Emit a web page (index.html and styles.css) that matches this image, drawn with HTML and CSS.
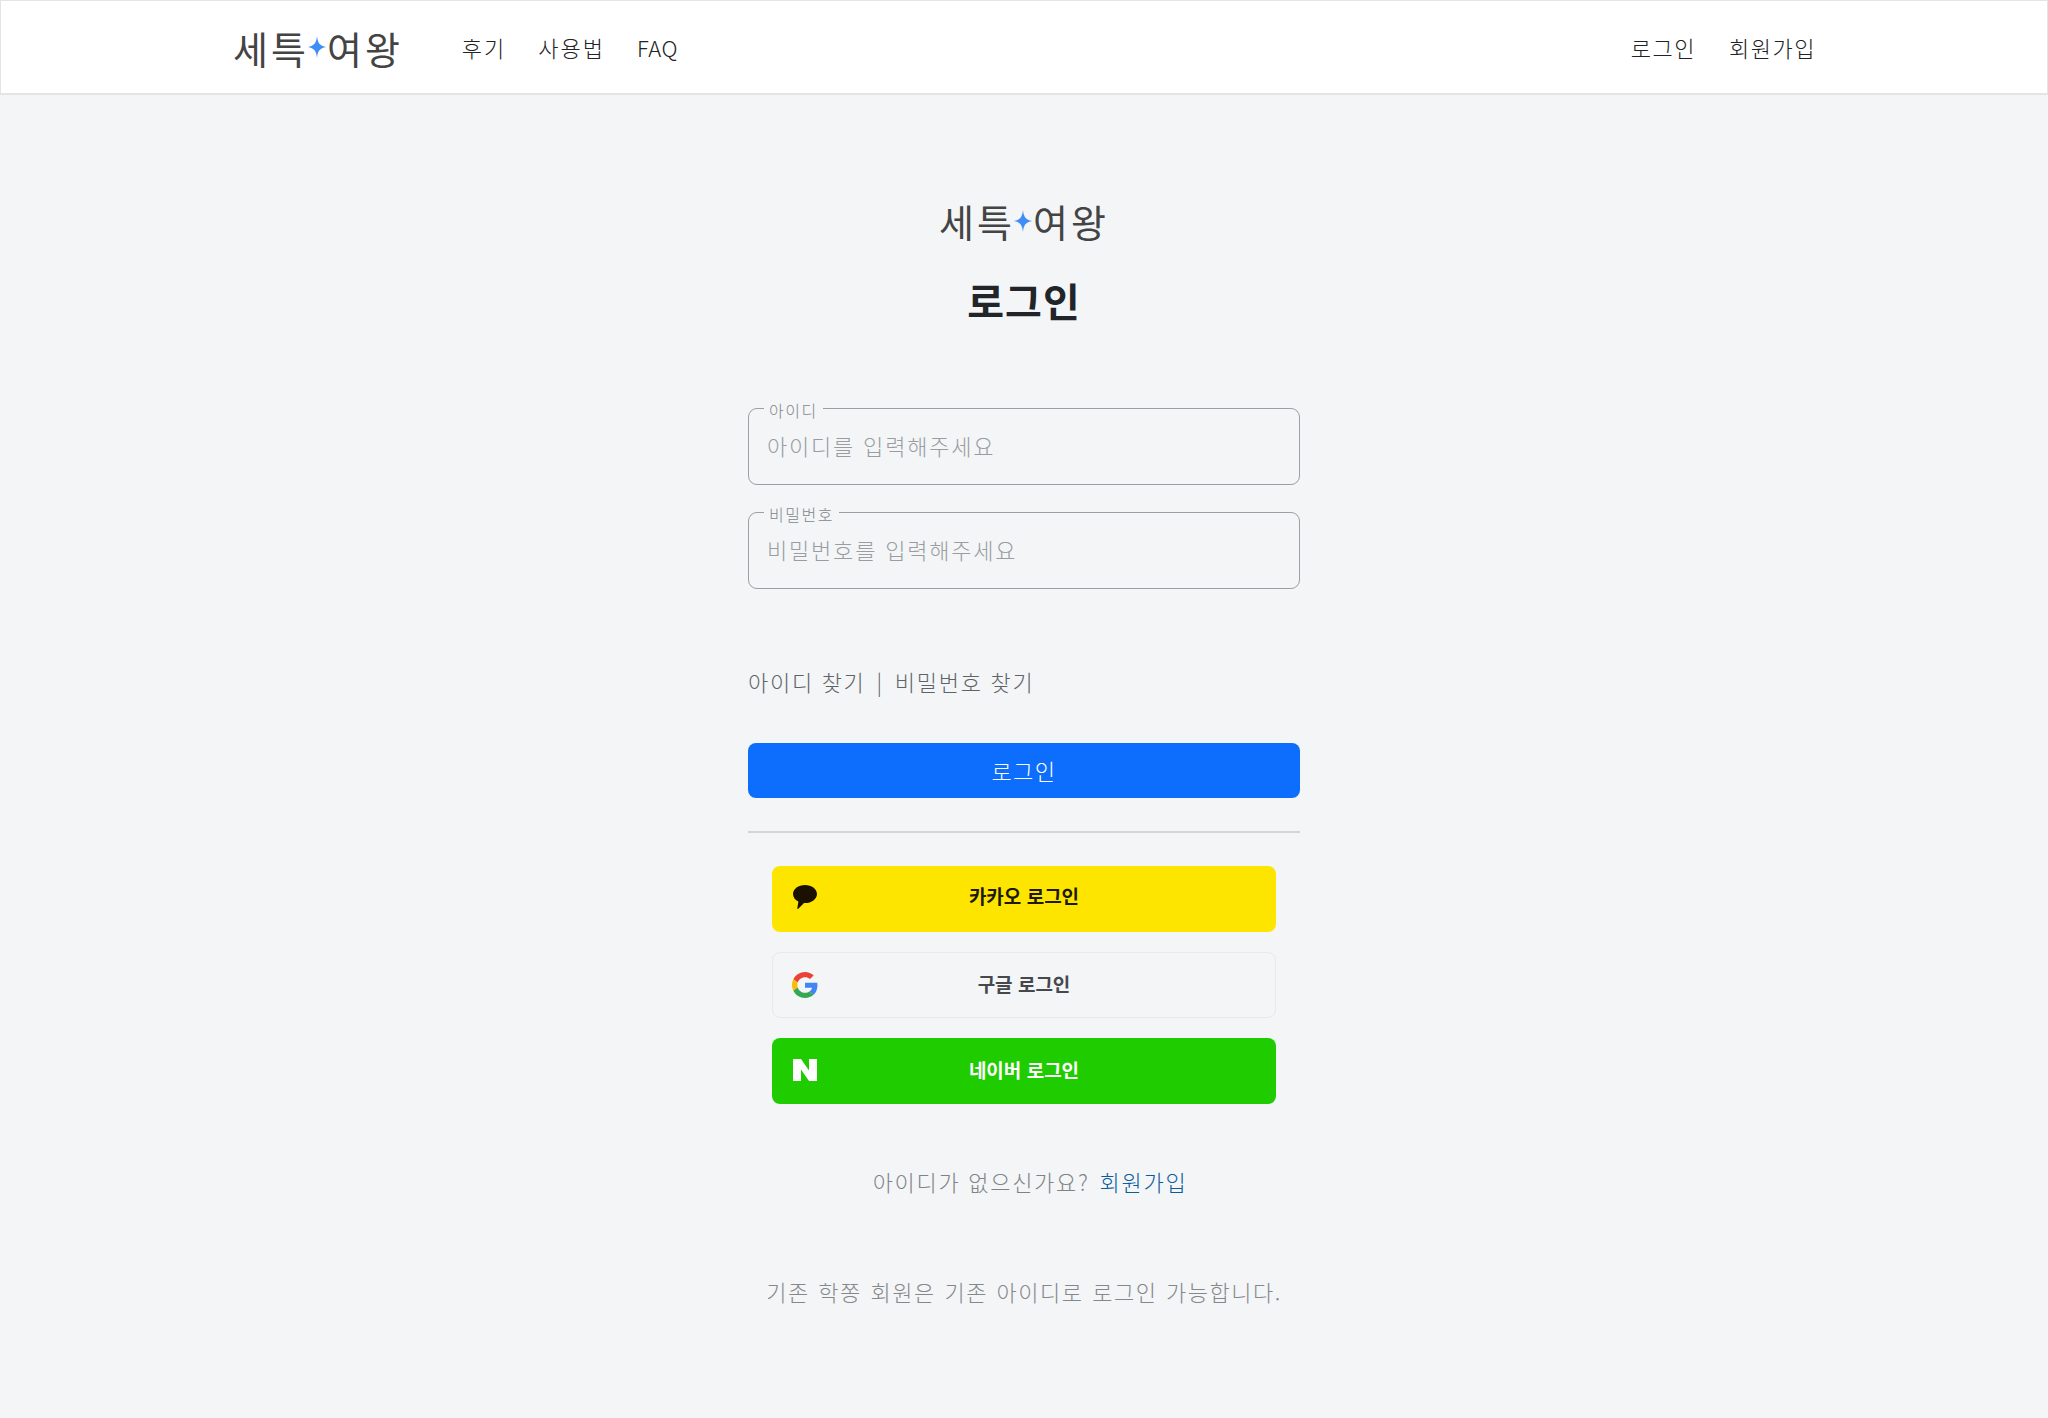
FILE: index.html
```html
<!DOCTYPE html>
<html lang="ko">
<head>
<meta charset="utf-8">
<title>로그인</title>
<link rel="stylesheet" href="styles.css">
</head>
<body>
<header class="topbar">
  <div class="topbar-inner">
    <a class="logo logo-top" href="#"><span>세특</span><svg class="star" viewBox="0 0 24 24"><path d="M12 0C12.8 7.5 15 10.8 22 12C15 13.2 12.8 16.5 12 24C11.2 16.5 9 13.2 2 12C9 10.8 11.2 7.5 12 0Z"/></svg><span>여왕</span></a>
    <nav class="nav-main"><a href="#">후기</a><a href="#">사용법</a><a class="latin" href="#">FAQ</a></nav>
    <nav class="nav-user"><a href="#">로그인</a><a href="#">회원가입</a></nav>
  </div>
</header>
<main class="login">
  <a class="logo logo-main" href="#"><span>세특</span><svg class="star" viewBox="0 0 24 24"><path d="M12 0C12.8 7.5 15 10.8 22 12C15 13.2 12.8 16.5 12 24C11.2 16.5 9 13.2 2 12C9 10.8 11.2 7.5 12 0Z"/></svg><span>여왕</span></a>
  <h1 class="title">로그인</h1>
  <form class="form">
    <fieldset class="field"><legend>아이디</legend><input type="text" placeholder="아이디를 입력해주세요"></fieldset>
    <fieldset class="field"><legend>비밀번호</legend><input type="password" placeholder="비밀번호를 입력해주세요"></fieldset>
    <div class="find"><a href="#">아이디 찾기</a><span class="bar">|</span><a href="#">비밀번호 찾기</a></div>
    <button class="submit" type="button">로그인</button>
  </form>
  <hr class="rule">
  <div class="social">
    <a class="sns kakao" href="#"><svg class="sns-icon" viewBox="0 0 26 26"><path fill="#1a1100" d="M13 1C6.400 1 1 4.900 1 10c0 3.200 2.200 6 5.400 7.600L5.300 24.500c-.1.500.3.700.700.400l6-5.900c.3 0 .7.100 1 .1 6.600 0 12-4 12-9.100S19.600 1 13 1Z"/></svg><span>카카오 로그인</span></a>
    <a class="sns google" href="#"><svg class="sns-icon" viewBox="0 0 48 48"><path fill="#EA4335" d="M24 9.500c3.540 0 6.710 1.220 9.210 3.600l6.850-6.850C35.900 2.380 30.470 0 24 0 14.620 0 6.510 5.380 2.560 13.220l7.980 6.190C12.430 13.720 17.740 9.500 24 9.500z"/><path fill="#4285F4" d="M46.980 24.550c0-1.570-.15-3.090-.38-4.550H24v9.020h12.940c-.58 2.960-2.260 5.480-4.780 7.180l7.730 6c4.510-4.180 7.090-10.360 7.090-17.650z"/><path fill="#FBBC05" d="M10.530 28.590c-.48-1.450-.76-2.990-.76-4.590s.27-3.140.76-4.590l-7.980-6.190C.92 16.460 0 20.120 0 24c0 3.880.92 7.540 2.560 10.780l7.970-6.190z"/><path fill="#34A853" d="M24 48c6.480 0 11.930-2.130 15.890-5.810l-7.730-6c-2.150 1.450-4.920 2.300-8.160 2.300-6.260 0-11.570-4.220-13.470-9.910l-7.980 6.190C6.510 42.620 14.620 48 24 48z"/></svg><span>구글 로그인</span></a>
    <a class="sns naver" href="#"><svg class="sns-icon" viewBox="0 0 26 26"><path fill="#fff" d="M17 2v11.500L9 2H1v22h8V12.500L17 24h8V2Z"/></svg><span>네이버 로그인</span></a>
  </div>
  <p class="signup">아이디가 없으신가요?<a href="#">회원가입</a></p>
  <p class="note">기존 학쫑 회원은 기존 아이디로 로그인 가능합니다.</p>
</main>
</body>
</html>
```
FILE: styles.css
```css
* { box-sizing: border-box; }
html, body { margin: 0; padding: 0; }
body {
  min-height: 1418px;
  background: #f3f5f7;
  color: #212529;
  font-family: "Noto Sans CJK KR", "Noto Sans", sans-serif;
  font-weight: 300;
  font-size: 22px;
  letter-spacing: 1.500px;
}
a { color: inherit; text-decoration: none; }

.topbar {
  height: 95px;
  background: #fff;
  border: 1px solid #e3e4e6;
  border-width: 1px 1px 2px 1px;
}
.topbar-inner {
  width: 1584px;
  height: 100%;
  margin: 0 auto;
  display: flex;
  align-items: center;
}
.logo {
  display: flex;
  align-items: center;
  justify-content: center;
  color: #444;
  font-weight: 400;
  font-size: 38px;
  letter-spacing: 3px;
}
.logo-top { margin-left: 1px; }
.star { width: 22px; height: 24px; fill: #3f8ef5; margin: 0 -1px 0 -3px; flex: none; }
.nav-main { display: flex; gap: 32px; margin-left: 59px; color: #222; letter-spacing: 2px; }
.nav-user { display: flex; gap: 33px; margin-left: auto; color: #222; }
.latin { letter-spacing: .500px; }

.login {
  width: 552px;
  margin: 0 auto;
  padding-top: 98px;
  display: flex;
  flex-direction: column;
}
.logo-main { line-height: 56px; height: 56px; }
.title {
  margin: 23px 0 0;
  text-align: center;
  font-size: 40px;
  font-weight: 700;
  line-height: 56px;
  color: #212529;
  letter-spacing: 1px;
}
.form { display: flex; flex-direction: column; margin-top: 67px; }
.field {
  margin: 0;
  height: 90px;
  padding: 0 18px;
  border: 1.500px solid #9b9ea3;
  border-radius: 9px;
  min-width: 0;
}
.field + .field { margin-top: 14px; }
.field legend {
  margin-left: -3px;
  padding: 4px 5px 0;
  font-size: 16px;
  line-height: 22px;
  letter-spacing: 1.500px;
  color: #83868a;
}
.field input {
  display: block;
  width: 100%;
  height: 46px;
  margin-top: 1px;
  padding: 0;
  border: 0;
  outline: 0;
  background: transparent;
  font: inherit;
  letter-spacing: 1.800px;
  color: #212529;
}
.field input::placeholder { color: #999ca1; opacity: 1; }
.find { display: flex; align-items: center; margin-top: 76px; line-height: 32px; color: #606366; letter-spacing: 1.700px; }
.bar { margin: 0 11px; }
.submit {
  margin-top: 46px;
  height: 55px;
  padding: 0 0 2px;
  border: 0;
  border-radius: 8px;
  background: #0d6efd;
  color: #fff;
  font: inherit;
  letter-spacing: inherit;
}
.rule { width: 100%; margin: 33px 0 0; border: 0; border-top: 2px solid #d3d5d8; }
.social { display: flex; flex-direction: column; gap: 20px; margin: 33px 24px 0; }
.sns {
  position: relative;
  height: 66px;
  border-radius: 8px;
  display: flex;
  align-items: center;
  justify-content: center;
  font-size: 19px;
  font-weight: 700;
  letter-spacing: 0;
}
.sns-icon { position: absolute; left: 20px; top: 18px; width: 26px; height: 26px; }
.kakao { background: #fee500; color: #1c1a05; padding-bottom: 7px; }
.google { border: 1.500px solid #e8e9eb; color: #45484c; padding-bottom: 3px; }
.google .sns-icon { left: 19px; top: 19px; }
.naver { background: #1fcc00; color: #fff; padding-bottom: 4px; }
.naver .sns-icon { top: 19px; }
.signup {
  margin: 61px 0 0;
  padding-left: 12px;
  text-align: center;
  color: #808386;
  line-height: 32px;
  letter-spacing: 1.700px;
}
.signup a { color: #0a5c9b; margin-left: 10px; }
.note {
  margin: 78px 0 0;
  text-align: center;
  color: #85888b;
  line-height: 32px;
  white-space: nowrap;
  word-spacing: 1px;
}
```
